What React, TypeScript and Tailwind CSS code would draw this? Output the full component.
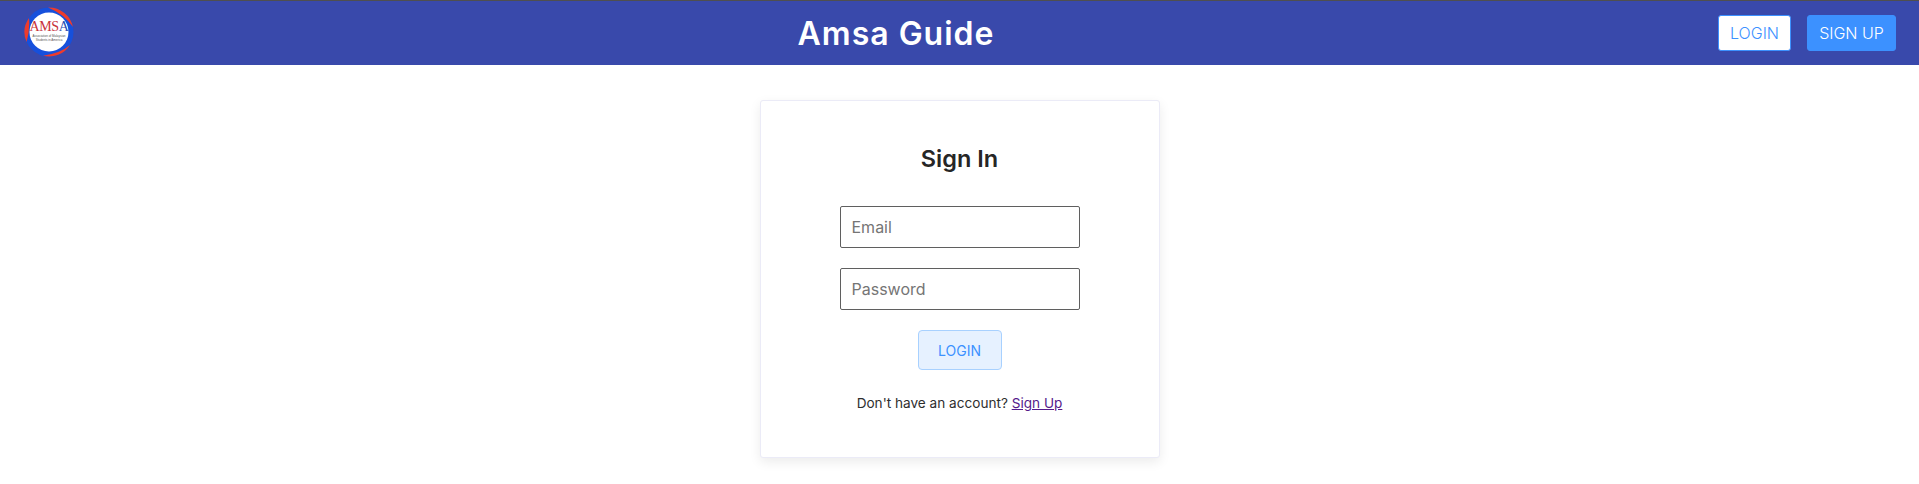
import React from 'react';

const Logo: React.FC = () => (
    <div className="relative w-[50px] h-[50px]">
        <svg viewBox="0 0 50 50" className="absolute inset-0 w-full h-full">
            <circle cx="25" cy="25" r="24.500" fill="#1650dc" />
            <path d="M24 .5 A24.500 24.500 0 0 1 49 20 Q40 7 24 .5Z" fill="#ee3b2b" />
            <path d="M5 11 A24.500 24.500 0 0 0 2.600 35 Q6 23 5 11Z" fill="#ee3b2b" />
            <path d="M19 48.800 A24.500 24.500 0 0 0 46 38 Q37 46 19 48.800Z" fill="#ee3b2b" />
            <circle cx="25" cy="25" r="19.500" fill="#ffffff" />
        </svg>
        <div className="absolute inset-0 flex flex-col items-center justify-center">
            <span className="text-[14px] leading-[13px] tracking-[-0.4px] font-['Liberation_Serif',serif] text-[#c8323a] mt-[-3px]">
                AMS<span className="text-[#2a4fb0]">A</span>
            </span>
            <span className="text-[3px] leading-[4px] text-[#555] font-['Liberation_Sans',sans-serif] mt-[1px]">Association of Malaysian</span>
            <span className="text-[3px] leading-[4px] text-[#555] font-['Liberation_Sans',sans-serif]">Students in America</span>
        </div>
    </div>
);

const App: React.FC = () => {
    return (
        <div className="h-[484px] bg-white overflow-hidden font-['Inter',sans-serif]">
            <header className="h-[65px] bg-[#3949ab] border-t border-t-[#4f4f4f] flex items-center justify-between pl-[24px] pr-[23px]">
                <div className="w-[50px] mt-[-2px]">
                    <Logo />
                </div>
                <h1 className="text-[32px] font-semibold tracking-[1px] text-white mt-[2px]">Amsa Guide</h1>
                <div className="flex items-center gap-[16px]">
                    <button className="w-[73px] h-[36px] bg-white border border-[#3c91ff] rounded-[3px] text-[16px] font-[350] text-[#3c91ff]">LOGIN</button>
                    <button className="w-[89px] h-[36px] bg-[#3c91ff] border border-[#3c91ff] rounded-[3px] text-[16px] font-[350] text-white">SIGN UP</button>
                </div>
            </header>
            <main className="flex justify-center pt-[35px]">
                <div className="w-[400px] h-[358px] bg-white border border-[#ebebf7] rounded-[3px] shadow-[0_4px_12px_rgba(0,0,0,0.08)] flex flex-col items-center">
                    <h2 className="mt-[40px] text-[23.5px] leading-[36px] font-semibold text-[#262626]">Sign In</h2>
                    <input placeholder="Email" className="mt-[29px] w-[240px] h-[42px] px-[11px] border border-[#5f5f5f] rounded-[2px] text-[16px] placeholder:text-[#757575] outline-none" />
                    <input placeholder="Password" className="mt-[20px] w-[240px] h-[42px] px-[11px] border border-[#5f5f5f] rounded-[2px] text-[16px] placeholder:text-[#757575] outline-none" />
                    <button className="mt-[20px] w-[84px] h-[40px] bg-[#e6f1ff] border border-[#a8d1ff] rounded-[4px] text-[14px] text-[#3c91ff]">LOGIN</button>
                    <p className="mt-[23px] text-[13.6px] leading-[20px] text-[#2e2e2e]">
                        Don't have an account? <a href="#" className="underline text-[#551a8b]">Sign Up</a>
                    </p>
                </div>
            </main>
        </div>
    );
};

export default App;
